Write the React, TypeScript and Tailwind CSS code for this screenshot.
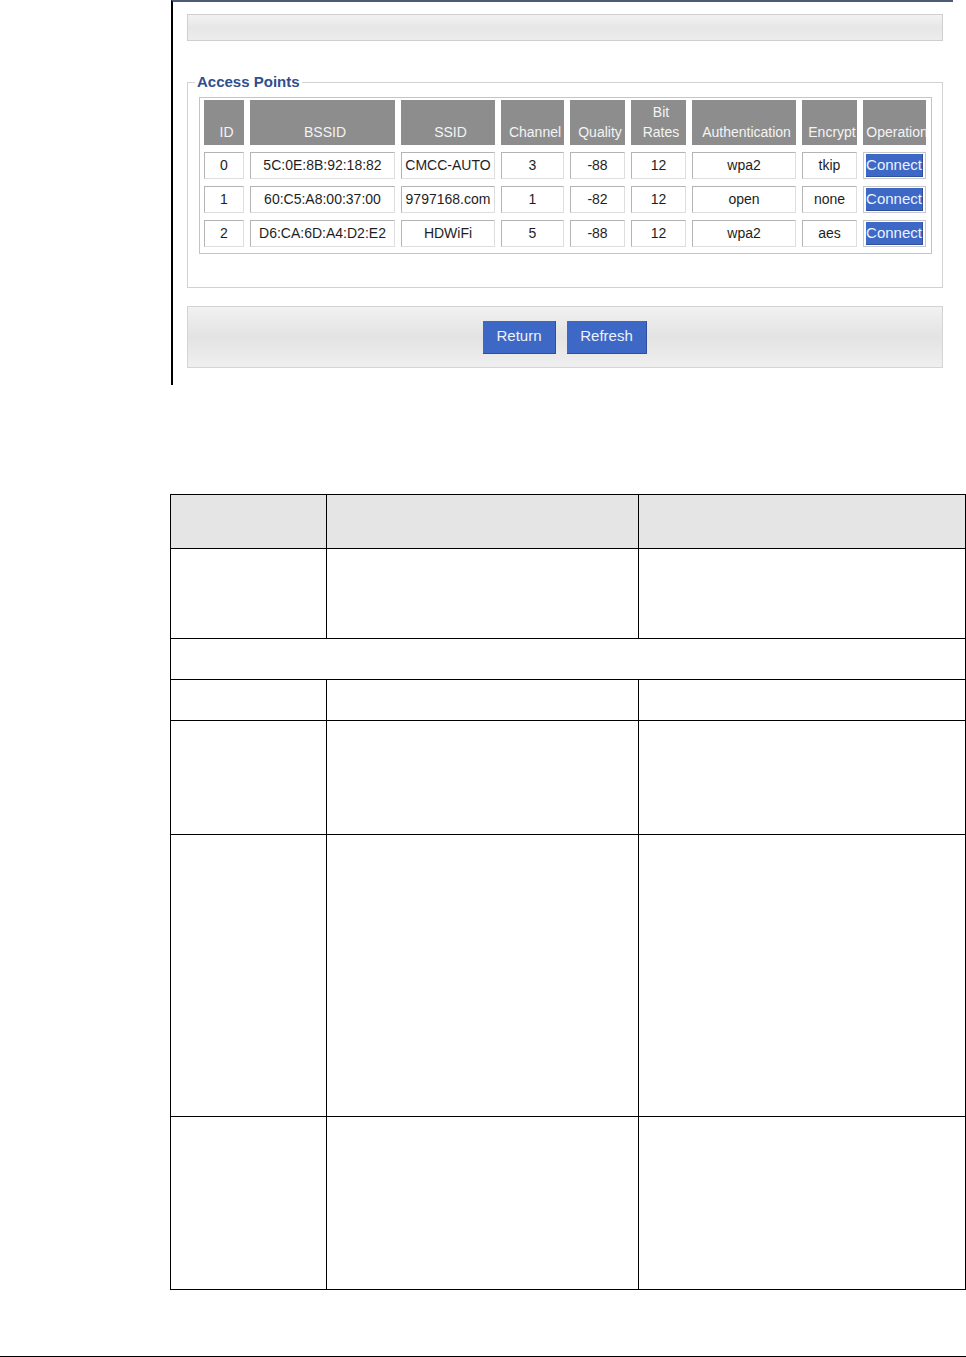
import React from 'react'

type Ap = {
  id: string
  bssid: string
  ssid: string
  channel: string
  quality: string
  rate: string
  auth: string
  enc: string
}

const columns: Array<{ key: string; label: React.ReactNode }> = [
  { key: 'id', label: 'ID' },
  { key: 'bssid', label: 'BSSID' },
  { key: 'ssid', label: 'SSID' },
  { key: 'channel', label: 'Channel' },
  { key: 'quality', label: 'Quality' },
  {
    key: 'rate',
    label: (
      <>
        Bit
        <br />
        Rates
      </>
    )
  },
  { key: 'auth', label: 'Authentication' },
  { key: 'enc', label: 'Encrypt' },
  { key: 'op', label: 'Operation' }
]

const points: Ap[] = [
  { id: '0', bssid: '5C:0E:8B:92:18:82', ssid: 'CMCC-AUTO', channel: '3', quality: '-88', rate: '12', auth: 'wpa2', enc: 'tkip' },
  { id: '1', bssid: '60:C5:A8:00:37:00', ssid: '9797168.com', channel: '1', quality: '-82', rate: '12', auth: 'open', enc: 'none' },
  { id: '2', bssid: 'D6:CA:6D:A4:D2:E2', ssid: 'HDWiFi', channel: '5', quality: '-88', rate: '12', auth: 'wpa2', enc: 'aes' }
]

// lower document table: row heights in px
const docRows: Array<{ h: string; merged?: boolean; head?: boolean }> = [
  { h: 'h-[54px]', head: true },
  { h: 'h-[90px]' },
  { h: 'h-[41px]', merged: true },
  { h: 'h-[41px]' },
  { h: 'h-[114px]' },
  { h: 'h-[282px]' },
  { h: 'h-[173px]' }
]

function DataCell({ children }: { children: React.ReactNode }) {
  return (
    <div className="flex h-[27px] items-center justify-center border border-t-[#b4b4b4] border-l-[#b4b4b4] border-r-[#dedede] border-b-[#dedede] bg-white text-[14px] text-[#1e1e1e]">
      {children}
    </div>
  )
}

function BlueButton({ label, className }: { label: string; className: string }) {
  return (
    <button
      type="button"
      className={`flex items-center justify-center border-b border-r border-[#2d4f9c] bg-[#3d68c6] text-[15px] text-[#eef2fb] ${className}`}
    >
      {label}
    </button>
  )
}

export default function App() {
  return (
    <div className="flex h-[1357px] w-[966px] flex-col bg-white font-['Liberation_Sans',Arial,sans-serif]">
      {/* screenshot of the web admin page */}
      <div className="ml-[171px] flex h-[385px] w-[782px] flex-col border-l-2 border-t-2 border-l-black border-t-[#4c5b78] bg-white">
        <div className="ml-[14px] mt-[12px] h-[27px] w-[756px] border border-[#cfcfcf] bg-gradient-to-b from-[#f2f2f2] via-[#e6e6e6] to-[#ececec]" />

        <fieldset className="ml-[14px] mt-[33px] w-[756px] border border-[#d2d2d2] pb-[33px]">
          <legend className="ml-[7px] px-[2px] text-[15px] font-bold leading-[16px] text-[#2f4f8e]">
            Access Points
          </legend>

          <div className="ml-[11px] mt-[7px] w-[733px] border border-[#c4c4c4] px-[4px] pb-[6px] pt-[2px]">
            <div className="grid grid-cols-[40px_145px_94px_63px_55px_55px_104px_55px_63px] gap-x-[6px] gap-y-[7px]">
              {columns.map((c) => (
                <div
                  key={c.key}
                  className="flex h-[45px] items-end justify-center overflow-hidden whitespace-nowrap bg-[#8d8d8d] pb-[3px] text-center text-[14px] leading-[20px] text-[#f4f4f4]"
                >
                  <span className="pl-[5px]">{c.label}</span>
                </div>
              ))}

              {points.map((p) => (
                <React.Fragment key={p.id}>
                  <DataCell>{p.id}</DataCell>
                  <DataCell>{p.bssid}</DataCell>
                  <DataCell>{p.ssid}</DataCell>
                  <DataCell>{p.channel}</DataCell>
                  <DataCell>{p.quality}</DataCell>
                  <DataCell>{p.rate}</DataCell>
                  <DataCell>{p.auth}</DataCell>
                  <DataCell>{p.enc}</DataCell>
                  <div className="flex h-[27px] items-center justify-center border border-[#c8c8c8] bg-white px-[2px]">
                    <BlueButton label="Connect" className="h-[23px] w-full" />
                  </div>
                </React.Fragment>
              ))}
            </div>
          </div>
        </fieldset>

        <div className="ml-[14px] mt-[18px] flex h-[62px] w-[756px] items-center justify-center gap-[11px] border border-[#d4d4d4] bg-gradient-to-b from-[#f1f1f1] via-[#e3e3e3] to-[#efefef]">
          <BlueButton label="Return" className="h-[33px] w-[73px]" />
          <BlueButton label="Refresh" className="h-[33px] w-[80px]" />
        </div>
      </div>

      {/* document table */}
      <table className="ml-[170px] mt-[109px] w-[795px] table-fixed border-collapse">
        <colgroup>
          <col className="w-[156px]" />
          <col className="w-[312px]" />
          <col className="w-[327px]" />
        </colgroup>
        <tbody>
          {docRows.map((r, i) =>
            r.merged ? (
              <tr key={i} className={r.h}>
                <td colSpan={3} className="border-[1.5px] border-black" />
              </tr>
            ) : (
              <tr key={i} className={`${r.h} ${r.head ? 'bg-[#e5e5e5]' : ''}`}>
                <td className="border-[1.5px] border-black" />
                <td className="border-[1.5px] border-black" />
                <td className="border-[1.5px] border-black" />
              </tr>
            )
          )}
        </tbody>
      </table>

      <div className="mt-auto h-[1.5px] w-full bg-black" />
    </div>
  )
}
